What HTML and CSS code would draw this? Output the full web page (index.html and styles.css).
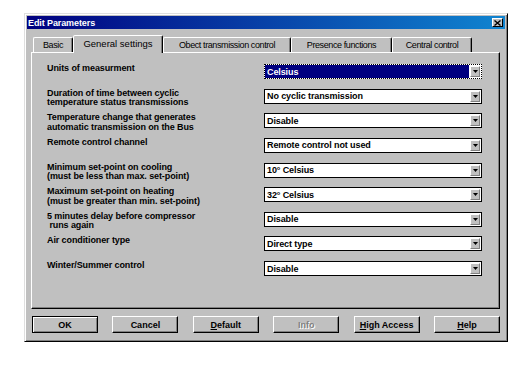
FILE: index.html
```html
<!DOCTYPE html>
<html>
<head>
<meta charset="utf-8">
<link rel="stylesheet" href="styles.css">
</head>
<body>
<div class="dialog">
  <div class="titlebar">
    <span class="title">Edit Parameters</span>
    <span class="close"><svg width="7" height="6" viewBox="0 0 7 6"><path d="M0.5 0.5 L6.5 5.5 M6.5 0.5 L0.5 5.5" stroke="#000" stroke-width="1.4" fill="none"/></svg></span>
  </div>
  <div class="tabs">
    <div class="tab t-basic">Basic</div>
    <div class="tab active t-general">General settings</div>
    <div class="tab t-object">Obect transmission control</div>
    <div class="tab t-presence">Presence functions</div>
    <div class="tab t-central">Central control</div>
  </div>
  <div class="panel">
    <div class="grid">
      <div class="label">Units of measurment</div>
      <div class="combo selected"><span class="value">Celsius</span><span class="arrow"><svg width="5" height="3" viewBox="0 0 5 3"><polygon points="0,0 5,0 2.5,3" fill="#000"/></svg></span></div>

      <div class="label">Duration of time between cyclic<br>temperature status transmissions</div>
      <div class="combo"><span class="value">No cyclic transmission</span><span class="arrow"><svg width="5" height="3" viewBox="0 0 5 3"><polygon points="0,0 5,0 2.5,3" fill="#000"/></svg></span></div>

      <div class="label">Temperature change that generates<br>automatic transmission on the Bus</div>
      <div class="combo"><span class="value">Disable</span><span class="arrow"><svg width="5" height="3" viewBox="0 0 5 3"><polygon points="0,0 5,0 2.5,3" fill="#000"/></svg></span></div>

      <div class="label">Remote control channel</div>
      <div class="combo"><span class="value">Remote control not used</span><span class="arrow"><svg width="5" height="3" viewBox="0 0 5 3"><polygon points="0,0 5,0 2.5,3" fill="#000"/></svg></span></div>

      <div class="label">Minimum set-point on cooling<br>(must be less than max. set-point)</div>
      <div class="combo"><span class="value">10° Celsius</span><span class="arrow"><svg width="5" height="3" viewBox="0 0 5 3"><polygon points="0,0 5,0 2.5,3" fill="#000"/></svg></span></div>

      <div class="label">Maximum set-point on heating<br>(must be greater than min. set-point)</div>
      <div class="combo"><span class="value">32° Celsius</span><span class="arrow"><svg width="5" height="3" viewBox="0 0 5 3"><polygon points="0,0 5,0 2.5,3" fill="#000"/></svg></span></div>

      <div class="label">5 minutes delay before compressor<br>&nbsp;runs again</div>
      <div class="combo"><span class="value">Disable</span><span class="arrow"><svg width="5" height="3" viewBox="0 0 5 3"><polygon points="0,0 5,0 2.5,3" fill="#000"/></svg></span></div>

      <div class="label">Air conditioner type</div>
      <div class="combo"><span class="value">Direct type</span><span class="arrow"><svg width="5" height="3" viewBox="0 0 5 3"><polygon points="0,0 5,0 2.5,3" fill="#000"/></svg></span></div>

      <div class="label">Winter/Summer control</div>
      <div class="combo"><span class="value">Disable</span><span class="arrow"><svg width="5" height="3" viewBox="0 0 5 3"><polygon points="0,0 5,0 2.5,3" fill="#000"/></svg></span></div>
    </div>
  </div>
  <div class="buttons">
    <div class="btn default">OK</div>
    <div class="btn">Cancel</div>
    <div class="btn"><u>D</u>efault</div>
    <div class="btn disabled">Info</div>
    <div class="btn"><u>H</u>igh Access</div>
    <div class="btn"><u>H</u>elp</div>
  </div>
</div>
</body>
</html>
```

FILE: styles.css
```css
html, body {
  margin: 0;
  background: #ffffff;
}
body {
  padding: 13px 0 0 24px;
  font-family: "Liberation Sans", Arial, sans-serif;
}
.dialog {
  box-sizing: border-box;
  width: 484px;
  height: 329px;
  background: #c0c0c0;
  border: 1px solid;
  border-color: #dfdfdf #000000 #000000 #dfdfdf;
  box-shadow: inset 1px 1px #ffffff, inset -1px -1px #808080;
  padding: 2px;
}
.titlebar {
  height: 13px;
  background: linear-gradient(to right, #000080, #1084d0);
  display: flex;
  align-items: center;
  justify-content: space-between;
  padding: 0 2px 0 1px;
}
.title {
  color: #fff;
  font-weight: bold;
  font-size: 9px;
  letter-spacing: -0.1px;
}
.close {
  box-sizing: border-box;
  width: 11px;
  height: 9px;
  background: #c0c0c0;
  border: 1px solid;
  border-color: #ffffff #000000 #000000 #ffffff;
  display: flex;
  align-items: center;
  justify-content: center;
}
.close svg { display: block; }
.tabs {
  display: flex;
  align-items: flex-end;
  height: 17px;
  margin-top: 6px;
  padding-left: 6px;
}
.tab {
  box-sizing: border-box;
  height: 15px;
  border: 1px solid;
  border-bottom: none;
  border-color: #ffffff #000000 transparent #ffffff;
  box-shadow: inset -1px 0 #808080;
  border-radius: 2px 2px 0 0;
  font-size: 9px;
  letter-spacing: -0.4px;
  color: #000;
  display: flex;
  align-items: center;
  justify-content: center;
}
.tab.active {
  height: 18px;
  margin-bottom: -1px;
  position: relative;
  z-index: 1;
  background: #c0c0c0;
  font-size: 9.5px;
  letter-spacing: 0;
  padding-bottom: 2px;
}
.t-basic { width: 40px; }
.t-general { width: 90px; }
.t-object { width: 128px; }
.t-presence { width: 101px; }
.t-central { width: 80px; }
.panel {
  box-sizing: border-box;
  width: 469px;
  height: 257px;
  margin-left: 4px;
  border: 1px solid;
  border-color: #ffffff #000000 #000000 #ffffff;
  box-shadow: inset -1px -1px #808080;
  padding: 11px 17px 0 15px;
}
.grid {
  display: grid;
  grid-template-columns: 1fr 218px;
  grid-auto-rows: 24.625px;
}
.label {
  font-size: 9px;
  font-weight: bold;
  line-height: 9.5px;
  letter-spacing: -0.1px;
  color: #000;
}
.combo {
  box-sizing: border-box;
  height: 15px;
  border: 1px solid #000;
  background: #fff;
  display: flex;
  align-items: center;
  justify-content: space-between;
}
.combo .value {
  font-size: 9px;
  font-weight: bold;
  letter-spacing: -0.1px;
  padding-left: 2px;
  color: #000;
}
.combo.selected {
  border-style: dotted;
}
.combo.selected .value {
  align-self: stretch;
  flex: 1;
  background: #000080;
  color: #fff;
  display: flex;
  align-items: center;
  margin: 0 1px 0 0;
}
.arrow {
  box-sizing: border-box;
  width: 10px;
  height: 11px;
  margin-right: 1px;
  background: #c0c0c0;
  border: 1px solid;
  border-color: #ffffff #808080 #808080 #ffffff;
  display: flex;
  align-items: center;
  justify-content: center;
}
.arrow svg { display: block; }
.buttons {
  display: flex;
  justify-content: space-between;
  width: 468px;
  margin: 7px 0 0 5px;
}
.btn {
  box-sizing: border-box;
  width: 66px;
  height: 17px;
  border: 1px solid;
  border-color: #ffffff #000000 #000000 #ffffff;
  box-shadow: inset -1px -1px #808080;
  font-size: 9px;
  font-weight: bold;
  color: #000;
  display: flex;
  align-items: center;
  justify-content: center;
}
.btn.default {
  border-color: #000;
  box-shadow: inset 1px 1px #ffffff, inset -1px -1px #808080;
}
.btn.disabled {
  color: #808080;
  text-shadow: 1px 1px #ffffff;
}
```
